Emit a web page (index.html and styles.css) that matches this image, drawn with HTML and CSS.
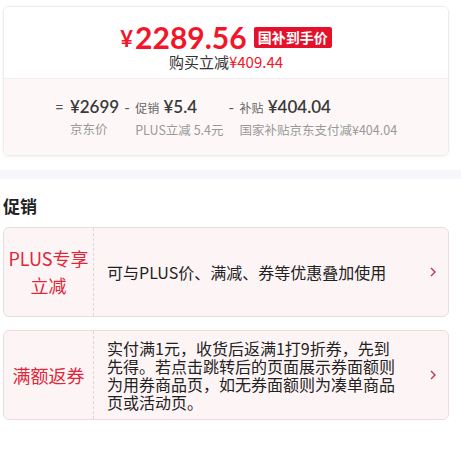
FILE: index.html
```html
<!DOCTYPE html>
<html lang="zh-CN">
<head>
    <meta charset="UTF-8">
    <title>价格与促销</title>
    <link rel="stylesheet" href="styles.css">
</head>
<body>
    <div class="price-card">
        <div class="price-top">
            <div class="price-line">
                <span class="yen">¥</span><span class="final">2289.56</span>
                <span class="badge">国补到手价</span>
            </div>
            <div class="save">购买立减<span class="red">¥409.44</span></div>
        </div>
        <div class="price-calc">
            <div class="calc-item">
                <span class="op op-eq">=</span>
                <div class="calc-body">
                    <div class="calc-val">¥2699</div>
                    <div class="calc-label">京东价</div>
                </div>
            </div>
            <div class="calc-item">
                <span class="op">-</span>
                <div class="calc-body">
                    <div class="calc-val"><span class="tag">促销</span> ¥5.4</div>
                    <div class="calc-label">PLUS立减 5.4元</div>
                </div>
            </div>
            <div class="calc-item">
                <span class="op">-</span>
                <div class="calc-body">
                    <div class="calc-val"><span class="tag">补贴</span> ¥404.04</div>
                    <div class="calc-label">国家补贴京东支付减¥404.04</div>
                </div>
            </div>
        </div>
    </div>

    <div class="band"></div>

    <h3 class="section-title">促销</h3>

    <div class="promo">
        <div class="promo-name">PLUS专享<br>立减</div>
        <div class="promo-desc">可与PLUS价、满减、券等优惠叠加使用</div>
        <svg class="chev" width="8" height="12" viewBox="0 0 8 12"><polyline points="2,2 6,6 2,10" fill="none" stroke="#c4334b" stroke-width="1.4"/></svg>
    </div>

    <div class="promo">
        <div class="promo-name">满额返券</div>
        <div class="promo-desc">实付满1元，收货后返满1打9折券，先到先得。若点击跳转后的页面展示券面额则为用券商品页，如无券面额则为凑单商品页或活动页。</div>
        <svg class="chev" width="8" height="12" viewBox="0 0 8 12"><polyline points="2,2 6,6 2,10" fill="none" stroke="#c4334b" stroke-width="1.4"/></svg>
    </div>
</body>
</html>
```

FILE: styles.css
```css
body {
    margin: 0;
    background: #ffffff;
    font-family: "Noto Sans CJK SC", "Noto Sans", sans-serif;
    color: #333;
}

.price-card {
    width: 444px;
    margin: 6px 0 0 3px;
    border: 1px solid #ececec;
    border-radius: 6px;
    box-shadow: 0 1px 3px rgba(0, 0, 0, 0.06);
    overflow: hidden;
}

.price-top {
    height: 71px;
    background: #ffffff;
    border-bottom: 1px solid #f6eeee;
    display: flex;
    flex-direction: column;
    align-items: center;
}

.price-line {
    display: flex;
    align-items: center;
    height: 32px;
    margin-top: 14px;
    color: #f2162b;
    font-family: Lato, "Noto Sans CJK SC", sans-serif;
    font-weight: bold;
}

.yen {
    font-size: 22px;
    line-height: 26px;
    margin-top: 3px;
    margin-right: 2px;
}

.final {
    font-size: 30px;
    line-height: 32px;
}

.badge {
    margin-left: 7px;
    background: #e5112b;
    color: #fff;
    font-family: "Noto Sans CJK SC", sans-serif;
    font-size: 14px;
    font-weight: bold;
    line-height: 21px;
    padding: 0 4px;
    border-radius: 2px;
}

.save {
    font-size: 15px;
    line-height: 18px;
    margin-top: 0;
    color: #333;
}

.red {
    color: #f2162b;
}

.price-calc {
    height: 76px;
    background: #fdf8f7;
    display: flex;
    justify-content: center;
    gap: 5px;
}

.calc-item {
    display: flex;
    padding-top: 16px;
}

.op {
    width: 11px;
    font-family: Lato, sans-serif;
    font-size: 15px;
    line-height: 24px;
    color: #555;
}

.op-eq {
    width: 15px;
}

.calc-body {
    display: flex;
    flex-direction: column;
}

.calc-val {
    font-family: Lato, "Noto Sans CJK SC", sans-serif;
    font-size: 17px;
    font-weight: 600;
    line-height: 24px;
    color: #3a3a3a;
}

.tag {
    font-family: "Noto Sans CJK SC", sans-serif;
    font-size: 12px;
    font-weight: normal;
    color: #666;
}

.calc-label {
    font-size: 12.5px;
    line-height: 20px;
    color: #999;
}

.band {
    height: 9px;
    margin-top: 14px;
    background: #f6f7fb;
}

.section-title {
    margin: 16px 0 0 3px;
    font-size: 17px;
    line-height: 22px;
    font-weight: bold;
    color: #222;
}

.promo {
    width: 444px;
    height: 88px;
    margin: 10px 0 0 3px;
    border: 1px solid #eedcdc;
    border-radius: 6px;
    background: #fdf5f5;
    display: flex;
    align-items: center;
}

.promo + .promo {
    margin-top: 13px;
}

.promo-name {
    width: 89px;
    height: 100%;
    display: flex;
    align-items: center;
    justify-content: center;
    text-align: center;
    border-right: 1px dashed #e2d4d4;
    font-size: 18px;
    line-height: 27px;
    color: #e0263a;
}

.promo-desc {
    flex: 1;
    padding: 0 34px 0 13px;
    font-size: 16px;
    line-height: 18px;
    color: #222;
}

.chev {
    margin-right: 11px;
}
```
